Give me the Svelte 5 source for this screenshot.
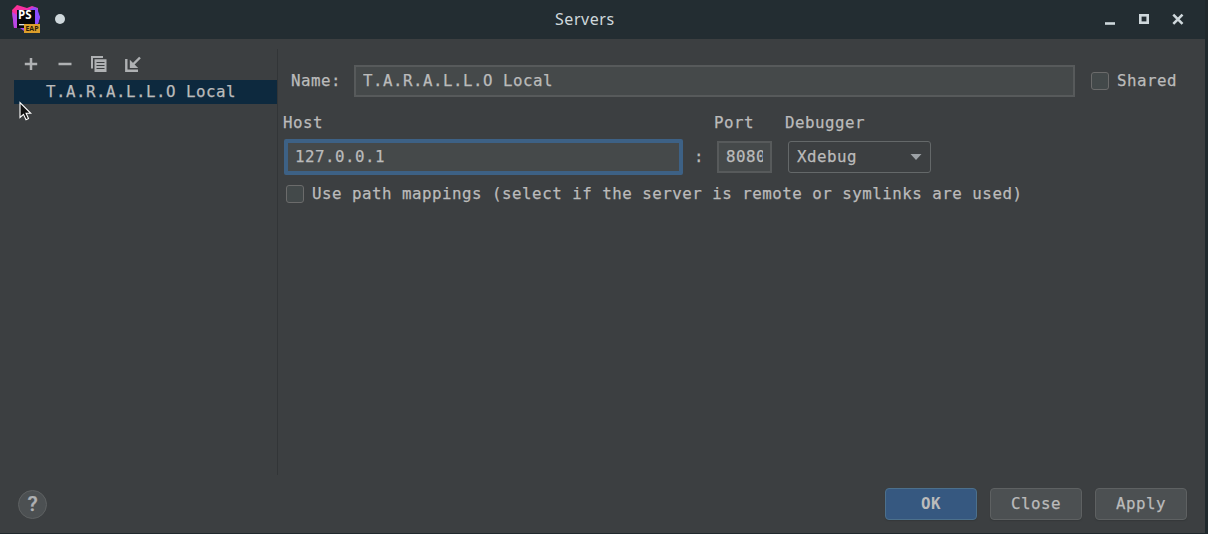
<script lang="ts">
  let name = $state('T.A.R.A.L.L.O Local');
  let host = $state('127.0.0.1');
  let port = $state('8080');
</script>

<div class="window">
  <header>
    <svg class="logo" width="30" height="31" viewBox="0 0 30 31">
      <defs>
        <linearGradient id="pink" x1="0" y1="0" x2="1" y2="1">
          <stop offset="0" stop-color="#ff318c" />
          <stop offset=".35" stop-color="#f32faa" />
          <stop offset=".62" stop-color="#a044f0" />
          <stop offset="1" stop-color="#c33be8" />
        </linearGradient>
      </defs>
      <path d="M0 5 5 0 15 3 20 1 26 3 26 9 28 12 25 22 18 26 12 26 8 23 2 23z" fill="url(#pink)" />
      <path d="M18 4 23 2 26 6 28 12 25 22 21 22z" fill="#8b4dff" />
      <path d="M0 7 5 10 5 21 2 23z" fill="#b847e6" />
      <rect x="5" y="5" width="18" height="18" fill="#07060a" />
      <text x="6" y="14.4" class="ps" textLength="13.5" lengthAdjust="spacingAndGlyphs">PS</text>
      <rect x="7" y="19" width="6" height="1.3" fill="#ddd" />
      <rect x="12" y="19" width="16" height="9" fill="#dc9e2b" />
      <text x="13.5" y="26.3" class="eap" textLength="13" lengthAdjust="spacingAndGlyphs">EAP</text>
    </svg>
    <span class="dot"></span>
    <h1>Servers</h1>
    <svg class="controls" width="82" height="16" viewBox="0 0 82 16">
      <path d="M1 12.5h10" stroke="#cfd8dc" stroke-width="2.6" />
      <rect x="36.3" y="4.3" width="7.4" height="7.4" fill="none" stroke="#cfd8dc" stroke-width="2.6" />
      <path d="M69.3 3.6l9.2 9.2M78.5 3.6l-9.2 9.2" stroke="#cfd8dc" stroke-width="2.6" />
    </svg>
  </header>

  <main>
    <aside>
      <div class="tools">
        <svg width="16" height="16" viewBox="0 0 16 16"><path d="M8 2v12M1.8 8h12.4" stroke="#afb1b3" stroke-width="2.5" /></svg>
        <svg width="16" height="16" viewBox="0 0 16 16"><path d="M1.5 8h13" stroke="#afb1b3" stroke-width="2.5" /></svg>
        <svg width="16" height="16" viewBox="0 0 16 16">
          <path d="M0 0h12v2H2v10.5H0z" fill="#afb1b3" />
          <path d="M3.5 3.3h12V16h-12zM5.5 6v1h8V6zM5.5 9v1h8V9zM5.5 12v1h8v-1z" fill="#afb1b3" fill-rule="evenodd" />
        </svg>
        <svg width="16" height="16" viewBox="0 0 16 16">
          <path d="M1.3 3v11.7H13M15 1.5 7.5 9" fill="none" stroke="#afb1b3" stroke-width="2.4" />
          <path d="M4.8 3.8V12h8.4z" fill="#afb1b3" />
        </svg>
      </div>
      <div class="item">{name}</div>
    </aside>

    <section>
      <div class="name-row">
        <label for="name">Name:</label>
        <input id="name" class="field" bind:value={name} />
        <span class="box"></span>
        <span class="shared">Shared</span>
      </div>
      <div class="server-grid">
        <span>Host</span><span></span><span class="port-label">Port</span><span class="debug-label">Debugger</span>
        <input class="field host" bind:value={host} />
        <span class="colon">:</span>
        <input class="field port" bind:value={port} />
        <div class="combo">
          <span>Xdebug</span>
          <svg width="12" height="6" viewBox="0 0 12 6"><path d="M.5 0h11L6 6z" fill="#9da2a6" /></svg>
        </div>
      </div>
      <div class="mapping">
        <span class="box"></span>
        <span>Use path mappings (select if the server is remote or symlinks are used)</span>
      </div>
    </section>
  </main>

  <footer>
    <span class="help">?</span>
    <button class="primary">OK</button>
    <button>Close</button>
    <button>Apply</button>
  </footer>

  <svg class="cursor" width="14" height="21" viewBox="0 0 14 21">
    <path d="M1 1.5v15l3.5-3.2 2.5 5.4 2.5-1.2-2.4-5.2h4.6z" fill="#111" stroke="#fff" stroke-width="1.1" />
  </svg>
</div>

<style>
  :global(body) { background: #20292d; }
  .window {
    position: relative;
    box-sizing: border-box;
    width: 1208px;
    height: 534px;
    display: flex;
    flex-direction: column;
    overflow: hidden;
    border-right: 3px solid #20292d;
    border-bottom: 1px solid #20292d;
    background: #3c3f41;
    color: #bbbbbb;
    font: 15.8px/20px "DejaVu Sans Mono", "Liberation Mono", monospace;
    letter-spacing: 0.495px;
    white-space: nowrap;
    -webkit-text-stroke: 0.25px;
  }
  header {
    height: 39px;
    flex: none;
    display: flex;
    align-items: center;
    box-sizing: border-box;
    padding-left: 12px;
    margin-right: -3px;
    background: #232d32;
    -webkit-text-stroke: 0;
  }
  .logo { flex: none; margin-top: 2px; }
  .ps { font: 700 12px "Open Sans", sans-serif; letter-spacing: 0; fill: #fff; }
  .eap { font: 700 7.5px "Open Sans", sans-serif; letter-spacing: 0; fill: #2a1c08; }
  .dot { width: 10px; height: 10px; margin: -1px 0 0 13px; border-radius: 50%; background: #cfd8dc; }
  h1 {
    margin: -1px 0 0 490px;
    width: 539px;
    color: #cfd8dc;
    font: 400 16px/24px "Noto Sans", sans-serif;
    letter-spacing: 0.55px;
  }
  .controls { flex: none; margin: -2px 0 0 10px; }
  main { flex: none; display: flex; height: 436px; }
  aside {
    box-sizing: border-box;
    width: 278px;
    margin-top: 10px;
    padding: 7px 0 0 14px;
    border-right: 1px solid #323537;
  }
  .tools { display: flex; gap: 18px; height: 24px; padding-left: 9px; }
  .item { height: 24px; line-height: 24px; padding-left: 32px; background: #0d293e; }
  section { flex: 1; padding: 26px 0 0 5px; }
  .name-row { display: flex; align-items: center; height: 32px; padding-left: 8px; }
  .name-row label { width: 63px; }
  .field {
    box-sizing: border-box;
    height: 32px;
    margin: 0;
    padding: 0 7px 2px;
    border: 2px solid #575a5b;
    border-radius: 0;
    outline: none;
    background: #45494a;
    color: #bbbbbb;
    font: inherit;
    letter-spacing: inherit;
  }
  #name { width: 721px; }
  .box {
    box-sizing: border-box;
    flex: none;
    width: 18px;
    height: 18px;
    border: 1px solid #6b6b6b;
    border-radius: 3px;
    background: #43494a;
  }
  .name-row .box { margin-left: 16px; }
  .shared { margin-left: 8px; }
  .server-grid {
    display: grid;
    grid-template-columns: 402px 32px 71px 144px;
    grid-template-rows: 20px 36px;
    row-gap: 6px;
    align-items: center;
    margin-top: 16px;
  }
  .port-label { margin-left: -3px; }
  .debug-label { margin-left: -3px; }
  .host {
    width: 399px;
    height: 36px;
    margin-left: 1px;
    padding: 0 7px 2px;
    border: 4px solid #3d6185;
    border-radius: 2px;
  }
  .colon { padding-left: 9px; }
  .port { width: 55px; }
  .combo {
    box-sizing: border-box;
    width: 143px;
    height: 32px;
    display: flex;
    align-items: center;
    justify-content: space-between;
    padding: 0 8px;
    border: 1px solid #646869;
    border-radius: 3px;
  }
  .mapping { display: flex; align-items: center; gap: 8px; height: 20px; margin-top: 9px; padding-left: 3px; }
  footer { display: flex; align-items: center; padding: 13px 18px 0 18px; height: 32px; gap: 13px; }
  .help {
    box-sizing: border-box;
    width: 29px;
    height: 29px;
    margin-right: auto;
    border: 1px solid #5e6162;
    border-radius: 50%;
    background: #4c5052;
    text-align: center;
    color: #afb1b3;
    font: 500 21px/27px Roboto, sans-serif;
    letter-spacing: 0;
  }
  button {
    box-sizing: border-box;
    width: 92px;
    height: 32px;
    padding: 0;
    border: 1px solid #5e6162;
    border-radius: 4px;
    background: #4c5052;
    color: #bbbbbb;
    box-shadow: 0 1px 1px #35383a;
    font: inherit;
    letter-spacing: inherit;
  }
  .primary { border-color: #4c708c; background: #365880; font-weight: 700; -webkit-text-stroke: 0; }
  .cursor { position: absolute; left: 19px; top: 101px; }
</style>
